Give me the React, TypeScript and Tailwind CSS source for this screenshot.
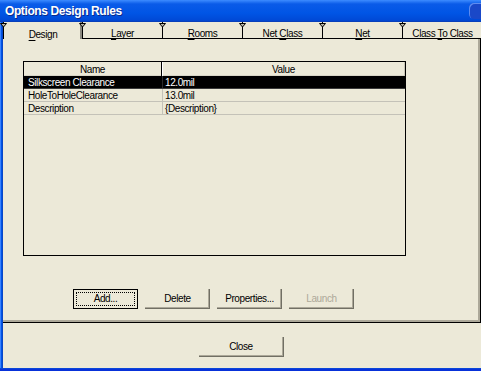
import React from 'react';

const tabs = [
    { pre: '', key: 'D', post: 'esign', active: true },
    { pre: '', key: 'L', post: 'ayer' },
    { pre: '', key: 'R', post: 'ooms' },
    { pre: 'Net ', key: 'C', post: 'lass' },
    { pre: '', key: 'N', post: 'et' },
    { pre: 'Class ', key: 'T', post: 'o Class' },
];

const rules = [
    { name: 'Silkscreen Clearance', value: '12.0mil', selected: true },
    { name: 'HoleToHoleClearance', value: '13.0mil' },
    { name: 'Description', value: '{Description}' },
];

const Notch: React.FC = () => (
    <svg width="7" height="5" viewBox="0 0 7 5" className="absolute -left-[4px] top-[1px]">
        <path d="M0.5 0.5 L3.5 4 L6.5 0.5 Z" fill="#b9b6a8" stroke="#000" strokeWidth="1" />
    </svg>
);

const Tab: React.FC<{ tab: typeof tabs[0]; first?: boolean }> = ({ tab, first }) => (
    <div
        className={`relative h-full shrink-0 flex items-end justify-center border-l border-black ${first ? 'w-[79px]' : 'w-[80px]'} ${tab.active ? 'shadow-[inset_-2px_0_0_#8c8a80]' : 'border-b'}`}
    >
        <Notch />
        <span className="leading-[11px] translate-y-[1px]">
            {tab.pre}
            <u className="underline underline-offset-2">{tab.key}</u>
            {tab.post}
        </span>
    </div>
);

const Button: React.FC<{ label: string; focused?: boolean; disabled?: boolean; wide?: boolean }> = ({ label, focused, disabled, wide }) => (
    <button
        className={`h-[20px] ${wide ? 'w-[85px]' : 'w-[65px]'} bg-[#ECE9D8] flex items-center justify-center ${focused ? 'border border-black p-[2px]' : 'shadow-[inset_-1px_-1px_0_#716f64,inset_-2px_-2px_0_#aca899]'} ${disabled ? 'text-[#aca899]' : 'text-black'}`}
    >
        <span className={`w-full h-full flex items-center justify-center leading-[12px] ${focused ? 'border border-dotted border-black' : ''}`}>
            {label}
        </span>
    </button>
);

const App: React.FC = () => {
    return (
        <div className="w-[481px] h-[371px] overflow-hidden flex flex-col bg-[#ECE9D8] text-black text-[10px] tracking-[-0.4px] font-['Liberation_Sans',Arial,sans-serif]">
            {/* title bar */}
            <div className="h-[22px] shrink-0 flex items-center pl-[5px] bg-[linear-gradient(to_bottom,#3d8cff_0%,#0a5be8_18%,#0055e5_60%,#0049d6_92%,#0b3bb0_100%)]">
                <span className="text-white font-bold text-[12px] tracking-[-0.4px] [text-shadow:1px_1px_0_#0c2a8a]">Options Design Rules</span>
                <div className="ml-auto h-[16px] w-[12px] rounded-l-[5px] bg-[#1a48c8] shadow-[inset_1px_1px_0_#5d8cf0]" />
            </div>

            <div className="flex-1 flex min-h-0">
                <div className="w-[3px] shrink-0 bg-[#0055e5] shadow-[inset_1px_0_0_#3b82ff,inset_-1px_0_0_#0a46c8]" />
                <div className="flex-1 flex flex-col min-w-0">
                    {/* tabs */}
                    <div className="h-[17px] shrink-0 flex">
                        {tabs.map((t, i) => (
                            <Tab key={i} tab={t} first={i === 0} />
                        ))}
                    </div>

                    {/* panel */}
                    <div className="h-[284px] shrink-0 flex flex-col pl-[20px] pt-[22px] border-r border-b border-black shadow-[inset_-2px_-2px_0_#aca899]">
                        <div className="w-[383px] h-[195px] border border-black bg-[#ECE9D8] flex flex-col">
                            <div className="h-[14px] shrink-0 flex">
                                <div className="w-[138px] flex items-center justify-center border-r border-black shadow-[inset_0_-1px_0_#d8d5c6]">Name</div>
                                <div className="flex-1 flex items-center justify-center shadow-[inset_1px_0_0_#fff,inset_-1px_0_0_#c8c5b6,inset_0_-1px_0_#d8d5c6]">Value</div>
                            </div>
                            {rules.map(r => (
                                <div
                                    key={r.name}
                                    className={`h-[13px] shrink-0 flex border-b ${r.selected ? 'bg-black text-white border-[#3a3a3a]' : 'border-[#c4c2b8]'}`}
                                >
                                    <div className={`w-[139px] pl-[4px] flex items-center border-r ${r.selected ? 'border-[#2a2a2a]' : 'border-[#c4c2b8]'}`}>{r.name}</div>
                                    <div className="flex-1 pl-[2px] flex items-center">{r.value}</div>
                                </div>
                            ))}
                        </div>

                        <div className="flex gap-[7px] pl-[50px] pt-[33px]">
                            <Button label="Add..." focused />
                            <Button label="Delete" />
                            <Button label="Properties..." />
                            <Button label="Launch" disabled />
                        </div>
                    </div>

                    {/* footer */}
                    <div className="flex-1 flex justify-center pt-[14px] pr-[2px]">
                        <Button label="Close" wide />
                    </div>
                </div>
            </div>

            <div className="h-[3px] shrink-0 bg-[#0831d9] shadow-[inset_0_1px_0_#0a46d8]" />
        </div>
    );
};

export default App;
